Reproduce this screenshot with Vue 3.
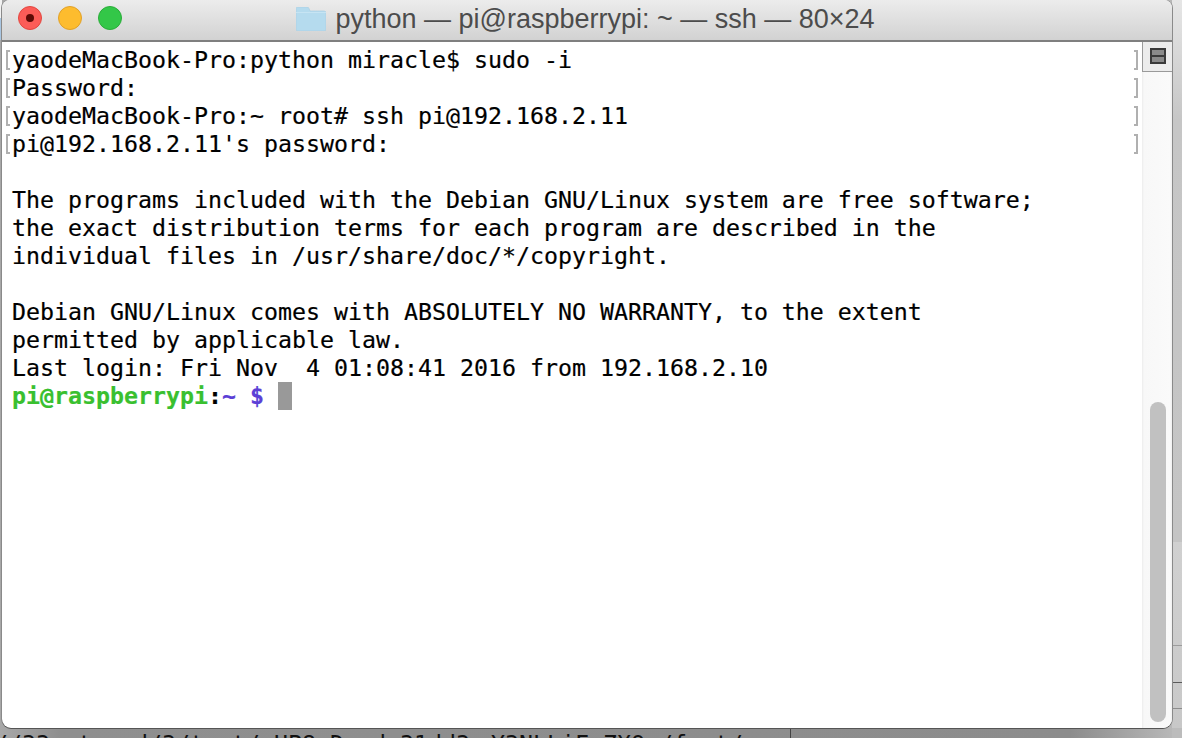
<script setup>
const rows = [
  { text: 'yaodeMacBook-Pro:python miracle$ sudo -i', mark: true },
  { text: 'Password:', mark: true },
  { text: 'yaodeMacBook-Pro:~ root# ssh pi@192.168.2.11', mark: true },
  { text: "pi@192.168.2.11's password:", mark: true },
  { text: '' },
  { text: 'The programs included with the Debian GNU/Linux system are free software;' },
  { text: 'the exact distribution terms for each program are described in the' },
  { text: 'individual files in /usr/share/doc/*/copyright.' },
  { text: '' },
  { text: 'Debian GNU/Linux comes with ABSOLUTELY NO WARRANTY, to the extent' },
  { text: 'permitted by applicable law.' },
  { text: 'Last login: Fri Nov  4 01:08:41 2016 from 192.168.2.10' }
]
</script>

<template>
  <div class="desktop">
    <div class="behind">//33 stored/3/test/.HP8.Dsad 31dd3.<span class="behind-tail">Y3NLLiF.ZXQ./fast/</span></div>
    <span class="behind-rule"></span>
    <div class="window">
      <header class="titlebar">
        <div class="lights">
          <span class="light red"><i></i></span>
          <span class="light yellow"></span>
          <span class="light green"></span>
        </div>
        <div class="title">
          <svg class="folder" width="30" height="24" viewBox="0 0 30 24">
            <path d="M0 2 Q0 0 2 0 H11 Q12.5 0 13 1.5 L14 4 H28 Q30 4 30 6 V22 Q30 24 28 24 H2 Q0 24 0 22 Z" fill="#b5dbee" stroke="#a9cfe2" stroke-width="0.7"/>
            <path d="M0 5.5 H30" stroke="#c6e4f3" stroke-width="1"/>
          </svg>
          <span>python — pi@raspberrypi: ~ — ssh — 80×24</span>
        </div>
      </header>
      <div class="body">
        <main class="terminal">
          <div v-for="(row, i) in rows" :key="i" class="row" :class="{ marked: row.mark }">{{ row.text }}</div>
          <div class="row prompt"><b class="green-t">pi@raspberrypi</b><b>:</b><b class="blue-t">~ $</b><span class="cursor"></span></div>
        </main>
        <aside class="scrollbar">
          <div class="split"><span class="split-icon"></span></div>
          <div class="track"><div class="thumb"></div></div>
        </aside>
      </div>
    </div>
  </div>
</template>

<style>
html, body { margin: 0; overflow: hidden; }
</style>

<style scoped>
.desktop {
  width: 1182px;
  height: 738px;
  position: relative;
  overflow: hidden;
  background:
    linear-gradient(#f2f2f2 0 18px, #a9c6e2 18px 40px, transparent 40px) left top / 2px 100% no-repeat,
    linear-gradient(90deg, #a8a8a8 0, #8f8f8f 60px, #8c8c8c 1070px, #bcbcbc 100%);
  box-sizing: border-box;
  padding: 0 10px 10px 2px;
}
.desktop::after {
  content: '';
  position: absolute;
  top: 0;
  right: 0;
  bottom: 0;
  width: 10px;
  background:
    linear-gradient(transparent 645px, #9c9c9c 645px 646px, transparent 646px 682px, #5a5a5a 682px 683px, transparent 683px 708px, #8c8c8c 708px 709px, transparent 709px),
    linear-gradient(#e6e6e6 0, #c6c6c6 120px, #c4c4c4 542px, #d0d0d0 542px, #c8c8c8 728px, #bcbcbc 728px);
}
.behind {
  position: absolute;
  left: -6px;
  top: 730px;
  font: 23.25px/28px "DejaVu Sans Mono", monospace;
  color: #111;
  white-space: pre;
}
.behind-tail { margin-left: 7px; }
.behind-rule {
  position: absolute;
  left: 790px;
  top: 728px;
  width: 1px;
  height: 10px;
  background: #444;
}
.window {
  position: relative;
  z-index: 1;
  height: 100%;
  display: flex;
  flex-direction: column;
  background: #fff;
  border-radius: 8px 8px 9px 9px;
  overflow: hidden;
  box-shadow: 0 1px 0 #555, 1px 0 0 #8a8a8a, -1px 0 0 #8a8a8a;
}
.titlebar {
  height: 42px;
  flex: none;
  box-sizing: border-box;
  position: relative;
  display: flex;
  align-items: center;
  justify-content: center;
  background: linear-gradient(#ececec, #d2d2d2);
  border-bottom: 2px solid #7f7f7f;
}
.lights {
  position: absolute;
  left: 16px;
  top: 6px;
  display: flex;
  gap: 16px;
}
.light {
  width: 24px;
  height: 24px;
  box-sizing: border-box;
  border-radius: 50%;
  display: flex;
  align-items: center;
  justify-content: center;
}
.light i { width: 8px; height: 8px; border-radius: 50%; background: #5e0b06; }
.red { background: #fc5c57; border: 1px solid #e2463f; }
.yellow { background: #fdbc2e; border: 1px solid #e0a028; }
.green { background: #33c748; border: 1px solid #2aac39; }
.title {
  display: flex;
  align-items: center;
  gap: 9px;
  padding: 0 3px 2px 0;
  font: 27px/30px "Liberation Sans", Arial, sans-serif;
  color: #4c4c4c;
  white-space: pre;
}
.folder { flex: none; }
.body {
  flex: 1;
  min-height: 0;
  display: flex;
}
.terminal {
  flex: 1;
  min-width: 0;
  position: relative;
  padding: 4px 0 0 10px;
  font: 23.25px/28px "DejaVu Sans Mono", monospace;
  color: #000;
  -webkit-text-stroke: 0.2px currentColor;
}
.row {
  height: 28px;
  white-space: pre;
  position: relative;
}
.marked::before,
.marked::after {
  content: '';
  position: absolute;
  top: 4px;
  width: 2px;
  height: 16px;
  border: 2px solid #b0b0b0;
}
.marked::before { left: -6px; border-right: 0; }
.marked::after { right: 4px; border-left: 0; }
.prompt { display: flex; align-items: center; }
.prompt b { font-weight: 700; }
.green-t { color: #39c02f; }
.blue-t { color: #5b3fd6; }
.cursor {
  width: 14px;
  height: 28px;
  background: #999;
  margin-left: 14px;
}
.scrollbar {
  width: 30px;
  flex: none;
  display: flex;
  flex-direction: column;
  background: linear-gradient(90deg, #ececec 0, #f8f8f8 2px, #fafafa 28px, #efefef 100%);
}
.split {
  height: 30px;
  flex: none;
  box-sizing: border-box;
  background: #ececec;
  border-left: 1px solid #9a9a9a;
  border-bottom: 1px solid #9a9a9a;
  padding: 0 0 2px;
  display: flex;
  align-items: center;
  justify-content: center;
}
.split-icon {
  width: 16px;
  height: 16px;
  box-sizing: border-box;
  background: linear-gradient(#8a8a8a 0 5px, #3a3a3a 5px 7px, #8a8a8a 7px);
  border: 2px solid #3a3a3a;
}
.track {
  flex: 1;
  min-height: 0;
  display: flex;
  flex-direction: column;
  justify-content: flex-end;
  padding: 0 6px 6px 8px;
}
.thumb {
  height: 320px;
  border-radius: 8px;
  background: #c1c1c1;
}
</style>
